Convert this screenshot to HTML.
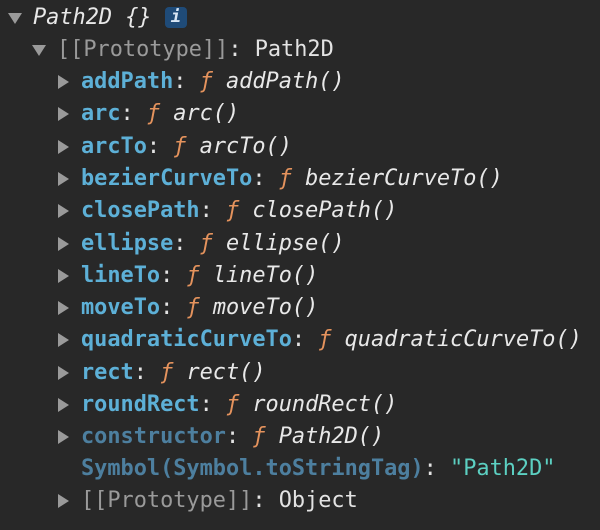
<!DOCTYPE html>
<html><head><style>
html,body{margin:0;background:#282828;width:600px;height:530px;overflow:hidden}
.r{position:absolute;left:0;height:32px;line-height:32px;white-space:pre;font-family:"DejaVu Sans Mono","Liberation Mono",monospace;font-size:21.9px;color:#e3e3e3}
.t{position:absolute;width:0;height:0;border-style:solid}
.down{border-width:11px 7.5px 0 7.5px;border-color:#9a9a9a transparent transparent transparent;top:11px}
.right{border-width:7px 0 7px 11px;border-color:transparent transparent transparent #9a9a9a;top:9px}
.k{color:#5db0d7;font-weight:bold}
.kd{color:#4d7f9f;font-weight:bold}
.f{color:#e5935d;font-style:italic}
.i{font-style:italic;color:#e8e8e8}
.g{color:#9a9a9a}
.s{color:#5cd0c2}
.info{display:inline-block;width:22px;height:21px;background:#1f4b78;border-radius:4px;color:#d8e6f5;font-size:17px;line-height:21px;text-align:center;font-style:italic;font-weight:bold;vertical-align:2px}
</style></head><body>
<div class="r" style="top:2px"><span class="t down" style="left:8px"></span><span style="position:absolute;left:33px"><span class="i">Path2D {}</span> <span class="info">i</span></span></div>
<div class="r" style="top:34px"><span class="t down" style="left:32px"></span><span style="position:absolute;left:57px"><span class="g">[[Prototype]]</span>: Path2D</span></div>
<div class="r" style="top:66px"><span class="t right" style="left:58px"></span><span style="position:absolute;left:81px"><span class="k">addPath</span>: <span class="f">ƒ</span> <span class="i">addPath()</span></span></div>
<div class="r" style="top:98px"><span class="t right" style="left:58px"></span><span style="position:absolute;left:81px"><span class="k">arc</span>: <span class="f">ƒ</span> <span class="i">arc()</span></span></div>
<div class="r" style="top:131px"><span class="t right" style="left:58px"></span><span style="position:absolute;left:81px"><span class="k">arcTo</span>: <span class="f">ƒ</span> <span class="i">arcTo()</span></span></div>
<div class="r" style="top:163px"><span class="t right" style="left:58px"></span><span style="position:absolute;left:81px"><span class="k">bezierCurveTo</span>: <span class="f">ƒ</span> <span class="i">bezierCurveTo()</span></span></div>
<div class="r" style="top:195px"><span class="t right" style="left:58px"></span><span style="position:absolute;left:81px"><span class="k">closePath</span>: <span class="f">ƒ</span> <span class="i">closePath()</span></span></div>
<div class="r" style="top:228px"><span class="t right" style="left:58px"></span><span style="position:absolute;left:81px"><span class="k">ellipse</span>: <span class="f">ƒ</span> <span class="i">ellipse()</span></span></div>
<div class="r" style="top:260px"><span class="t right" style="left:58px"></span><span style="position:absolute;left:81px"><span class="k">lineTo</span>: <span class="f">ƒ</span> <span class="i">lineTo()</span></span></div>
<div class="r" style="top:292px"><span class="t right" style="left:58px"></span><span style="position:absolute;left:81px"><span class="k">moveTo</span>: <span class="f">ƒ</span> <span class="i">moveTo()</span></span></div>
<div class="r" style="top:324px"><span class="t right" style="left:58px"></span><span style="position:absolute;left:81px"><span class="k">quadraticCurveTo</span>: <span class="f">ƒ</span> <span class="i">quadraticCurveTo()</span></span></div>
<div class="r" style="top:357px"><span class="t right" style="left:58px"></span><span style="position:absolute;left:81px"><span class="k">rect</span>: <span class="f">ƒ</span> <span class="i">rect()</span></span></div>
<div class="r" style="top:389px"><span class="t right" style="left:58px"></span><span style="position:absolute;left:81px"><span class="k">roundRect</span>: <span class="f">ƒ</span> <span class="i">roundRect()</span></span></div>
<div class="r" style="top:421px"><span class="t right" style="left:58px"></span><span style="position:absolute;left:81px"><span class="kd">constructor</span>: <span class="f">ƒ</span> <span class="i">Path2D()</span></span></div>
<div class="r" style="top:453px"><span style="position:absolute;left:81px"><span class="kd">Symbol(Symbol.toStringTag)</span>: <span class="s">"Path2D"</span></span></div>
<div class="r" style="top:485px"><span class="t right" style="left:58px"></span><span style="position:absolute;left:81px"><span class="g">[[Prototype]]</span>: Object</span></div>
</body></html>
